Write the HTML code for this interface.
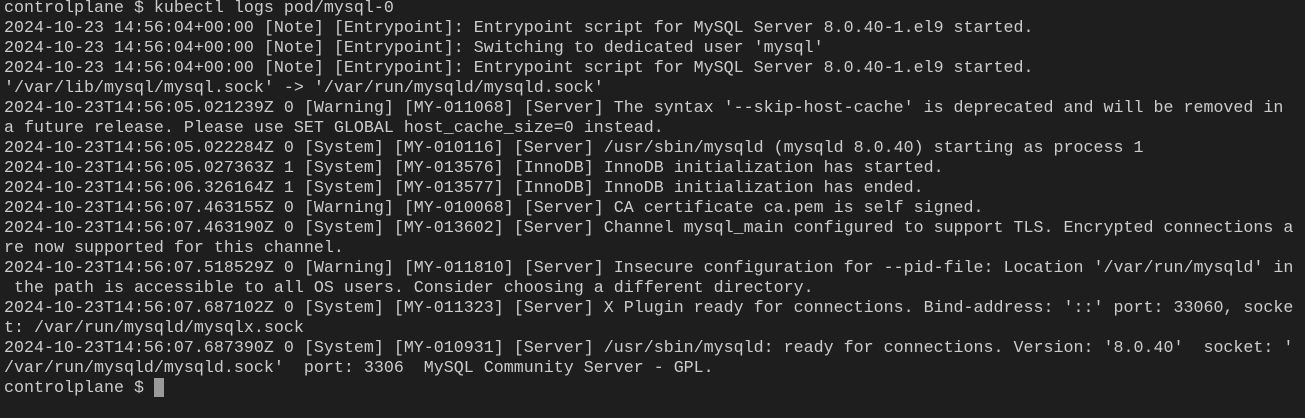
<!DOCTYPE html>
<html><head><style>
html,body{margin:0;padding:0;background:#1e1e1e;width:1305px;height:418px;overflow:hidden}
pre{position:absolute;left:4px;top:-1px;margin:0;font-family:"Liberation Mono",monospace;font-size:16.66px;line-height:20px;color:#cccccc;white-space:pre}
.c{display:inline-block;width:10px;height:19px;background:#9a9a9a;vertical-align:top;margin-top:-1px}
</style></head><body><pre>controlplane $ kubectl logs pod/mysql-0
2024-10-23 14:56:04+00:00 [Note] [Entrypoint]: Entrypoint script for MySQL Server 8.0.40-1.el9 started.
2024-10-23 14:56:04+00:00 [Note] [Entrypoint]: Switching to dedicated user 'mysql'
2024-10-23 14:56:04+00:00 [Note] [Entrypoint]: Entrypoint script for MySQL Server 8.0.40-1.el9 started.
'/var/lib/mysql/mysql.sock' -> '/var/run/mysqld/mysqld.sock'
2024-10-23T14:56:05.021239Z 0 [Warning] [MY-011068] [Server] The syntax '--skip-host-cache' is deprecated and will be removed in
a future release. Please use SET GLOBAL host_cache_size=0 instead.
2024-10-23T14:56:05.022284Z 0 [System] [MY-010116] [Server] /usr/sbin/mysqld (mysqld 8.0.40) starting as process 1
2024-10-23T14:56:05.027363Z 1 [System] [MY-013576] [InnoDB] InnoDB initialization has started.
2024-10-23T14:56:06.326164Z 1 [System] [MY-013577] [InnoDB] InnoDB initialization has ended.
2024-10-23T14:56:07.463155Z 0 [Warning] [MY-010068] [Server] CA certificate ca.pem is self signed.
2024-10-23T14:56:07.463190Z 0 [System] [MY-013602] [Server] Channel mysql_main configured to support TLS. Encrypted connections a
re now supported for this channel.
2024-10-23T14:56:07.518529Z 0 [Warning] [MY-011810] [Server] Insecure configuration for --pid-file: Location '/var/run/mysqld' in
 the path is accessible to all OS users. Consider choosing a different directory.
2024-10-23T14:56:07.687102Z 0 [System] [MY-011323] [Server] X Plugin ready for connections. Bind-address: '::' port: 33060, socke
t: /var/run/mysqld/mysqlx.sock
2024-10-23T14:56:07.687390Z 0 [System] [MY-010931] [Server] /usr/sbin/mysqld: ready for connections. Version: '8.0.40'  socket: '
/var/run/mysqld/mysqld.sock'  port: 3306  MySQL Community Server - GPL.
controlplane $ <span class="c"></span></pre></body></html>
